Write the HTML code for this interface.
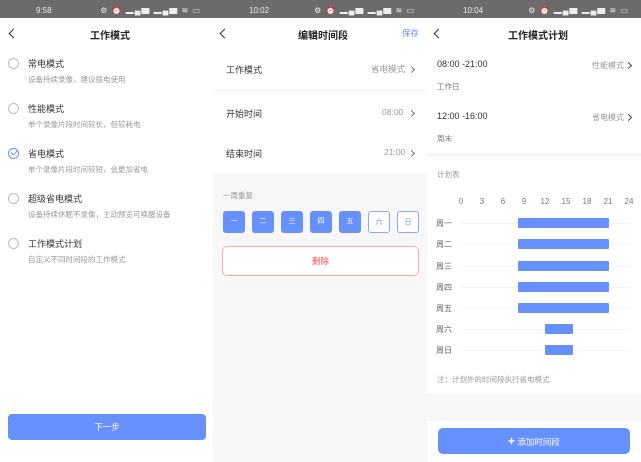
<!DOCTYPE html>
<html><head><meta charset="utf-8"><style>
*{margin:0;padding:0;box-sizing:border-box}
body{width:641px;height:462px;position:relative;overflow:hidden;font-family:"Liberation Sans","Noto Sans CJK SC",sans-serif;background:#fff;color:#333}
.p{position:absolute;top:0;height:462px;overflow:hidden}
.sb{position:absolute;left:0;top:0;width:100%;height:18px;background:#6b6b6b;color:#eee;font-size:8px}
.sb .t{position:absolute;left:36px;top:6px}
.sb .i{position:absolute;right:12px;top:5px;letter-spacing:1px;font-size:8px}
.a{position:absolute;white-space:nowrap}
.back{position:absolute;left:8px;top:30px;width:7px;height:7px;border-left:1.5px solid #333;border-bottom:1.5px solid #333;transform:rotate(45deg)}
.ti{font-size:10px;color:#222;font-weight:bold}
.r{width:11px;height:11px;border:1px solid #bbb;border-radius:50%}
.h{font-size:9px;color:#333}
.s{font-size:7.5px;color:#999}
.chev{position:absolute;width:5px;height:5px;border-right:1.2px solid #777;border-top:1.2px solid #777;transform:rotate(45deg)}
.d{position:absolute;width:22px;height:22px;border-radius:3px;background:#6690fb;color:#fff;font-size:7px;text-align:center;line-height:22px;top:211px}
.d.o{background:#fff;border:1px solid #8aa8fb;color:#6690fb}
.bar{position:absolute;height:10px;background:#6690fb;border-radius:1px}
.ln{position:absolute;left:462px;width:168px;height:1px;background:#f3f3f3}
.wl{position:absolute;left:436px;font-size:8px;color:#666}
.ax{position:absolute;top:197px;font-size:8px;color:#777;width:20px;text-align:center}
</style></head><body>
<!-- panel 1 -->
<div class="p" style="left:0;width:213px;background:#fff">
<div class="sb"><span class="t">9:58</span><span class="i">⚙ ⏰ ▂▄▆ ▂▄▆ ≋ ▭</span></div>
<div class="back" style="left:10px"></div>
<div class="a ti" style="left:90px;top:27px">工作模式</div>
<div class="a r" style="left:8px;top:58px"></div><div class="a h" style="left:28px;top:57px">常电模式</div><div class="a s" style="left:28px;top:74px">设备持续录像，建议插电使用</div>
<div class="a r" style="left:8px;top:103px"></div><div class="a h" style="left:28px;top:102px">性能模式</div><div class="a s" style="left:28px;top:119px">单个录像片段时间较长，但较耗电</div>
<div class="a r" style="left:8px;top:148px;border-color:#6690fb"></div><div class="a" style="left:11px;top:150px;width:6px;height:4px;border-left:1.2px solid #6690fb;border-bottom:1.2px solid #6690fb;transform:rotate(-45deg)"></div><div class="a h" style="left:28px;top:147px">省电模式</div><div class="a s" style="left:28px;top:164px">单个录像片段时间较短，会更加省电</div>
<div class="a r" style="left:8px;top:193px"></div><div class="a h" style="left:28px;top:192px">超级省电模式</div><div class="a s" style="left:28px;top:209px">设备持续休眠不录像，主动预览可唤醒设备</div>
<div class="a r" style="left:8px;top:238px"></div><div class="a h" style="left:28px;top:237px">工作模式计划</div><div class="a s" style="left:28px;top:254px">自定义不同时间段的工作模式</div>
<div class="a" style="left:8px;top:414px;width:198px;height:26px;background:#6690fb;border-radius:4px;color:#fff;font-size:8.5px;text-align:center;line-height:26px">下一步</div>
</div>
<!-- panel 2 -->
<div class="p" style="left:213px;width:214px;background:#f7f7f7">
<div class="sb"><span class="t">10:02</span><span class="i">⚙ ⏰ ▂▄▆ ▂▄▆ ≋ ▭</span></div>
<div class="a" style="left:0;top:18px;width:214px;height:71px;background:#fff"></div>
<div class="a" style="left:0;top:92px;width:214px;height:81px;background:#fff"></div>
<div class="back"></div>
<div class="a ti" style="left:85px;top:27px">编辑时间段</div>
<div class="a" style="left:189px;top:27px;font-size:8.5px;color:#6690fb">保存</div>
<div class="a h" style="left:13px;top:63px">工作模式</div><div class="a s" style="left:158px;top:63px;font-size:8.5px">省电模式</div><div class="chev" style="left:196px;top:67px"></div>
<div class="a h" style="left:13px;top:107px">开始时间</div><div class="a s" style="left:169px;top:107px;font-size:8.5px">08:00</div><div class="chev" style="left:196px;top:111px"></div>
<div class="a h" style="left:13px;top:147px">结束时间</div><div class="a s" style="left:171px;top:147px;font-size:8.5px">21:00</div><div class="chev" style="left:196px;top:151px"></div>
<div class="a s" style="left:10px;top:190px">一周重复</div>
<div class="d" style="left:10px">一</div><div class="d" style="left:39px">二</div><div class="d" style="left:68px">三</div><div class="d" style="left:97px">四</div><div class="d" style="left:126px">五</div><div class="d o" style="left:155px">六</div><div class="d o" style="left:184px">日</div>
<div class="a" style="left:9px;top:246px;width:197px;height:30px;border:1px solid #f5a8a8;border-radius:5px;background:#fff;color:#f05050;font-size:8.5px;text-align:center;line-height:28px">删除</div>
</div>
<!-- panel 3 -->
<div class="p" style="left:427px;width:214px;background:#fff">
<div class="sb"><span class="t">10:04</span><span class="i">⚙ ⏰ ▂▄▆ ▂▄▆ ≋ ▭</span></div>
<div class="back"></div>
<div class="a ti" style="left:81px;top:27px">工作模式计划</div>
<div class="a" style="left:10px;top:59px;font-size:9px;color:#333">08:00 -21:00</div><div class="a s" style="left:165px;top:60px;font-size:8px">性能模式</div><div class="chev" style="left:199px;top:63px;border-color:#444"></div>
<div class="a s" style="left:10px;top:81px;color:#777">工作日</div>
<div class="a" style="left:10px;top:111px;font-size:9px;color:#333">12:00 -16:00</div><div class="a s" style="left:165px;top:112px;font-size:8px">省电模式</div><div class="chev" style="left:199px;top:115px;border-color:#444"></div>
<div class="a s" style="left:10px;top:133px;color:#777">周末</div>
<div class="a" style="left:0;top:153px;width:214px;height:4px;background:#f7f7f7"></div>
<div class="a s" style="left:10px;top:169px">计划表</div>
<div class="a" style="left:0;top:394px;width:214px;height:27px;background:#f7f7f7"></div>
<div class="a s" style="left:10px;top:374px">注：计划外的时间段执行省电模式</div>
<div class="a" style="left:11px;top:428px;width:192px;height:26px;background:#6690fb;border-radius:5px;color:#fff;font-size:8.5px;text-align:center;line-height:26px"><b style="font-size:12px">+</b> 添加时间段</div>
</div>
<div class="ax" style="left:451px">0</div><div class="ax" style="left:472px">3</div><div class="ax" style="left:493px">6</div><div class="ax" style="left:514px">9</div><div class="ax" style="left:535px">12</div><div class="ax" style="left:556px">15</div><div class="ax" style="left:577px">18</div><div class="ax" style="left:598px">21</div><div class="ax" style="left:619px">24</div>
<div class="ln" style="top:223px"></div><div class="ln" style="top:244px"></div><div class="ln" style="top:266px"></div><div class="ln" style="top:287px"></div><div class="ln" style="top:308px"></div><div class="ln" style="top:329px"></div><div class="ln" style="top:350px"></div>
<div class="wl" style="top:218px">周一</div><div class="wl" style="top:239px">周二</div><div class="wl" style="top:261px">周三</div><div class="wl" style="top:282px">周四</div><div class="wl" style="top:303px">周五</div><div class="wl" style="top:324px">周六</div><div class="wl" style="top:345px">周日</div>
<div class="bar" style="left:518px;width:91px;top:218px"></div><div class="bar" style="left:518px;width:91px;top:239px"></div><div class="bar" style="left:518px;width:91px;top:261px"></div><div class="bar" style="left:518px;width:91px;top:282px"></div><div class="bar" style="left:518px;width:91px;top:303px"></div>
<div class="bar" style="left:545px;width:28px;top:324px"></div><div class="bar" style="left:545px;width:28px;top:345px"></div>
</body></html>
